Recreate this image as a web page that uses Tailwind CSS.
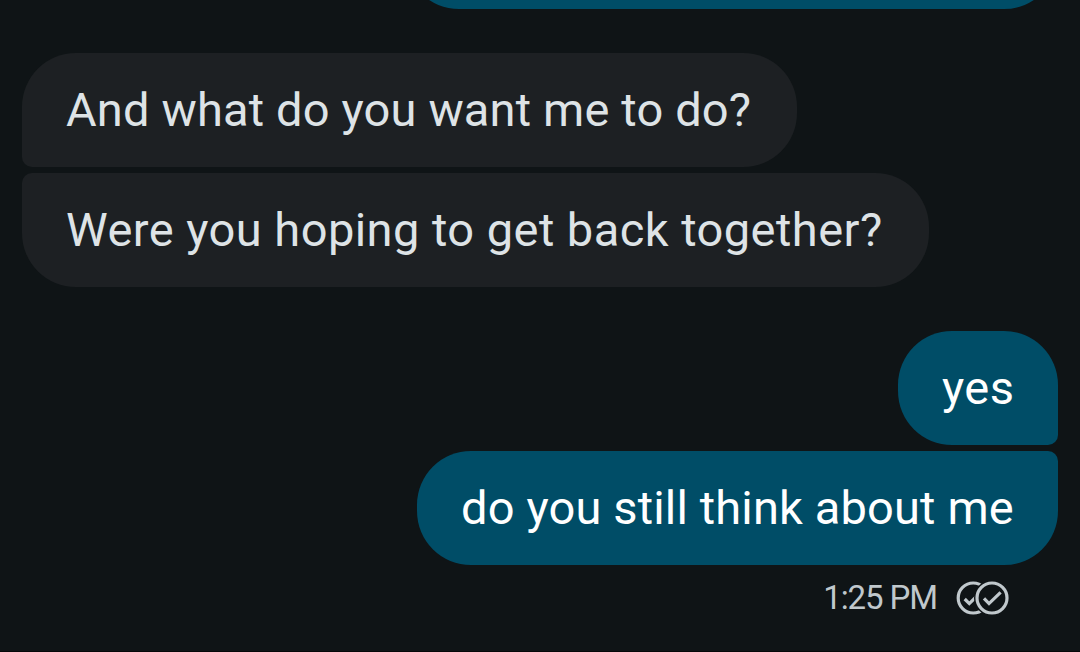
<!DOCTYPE html>
<html lang="en">
<head>
  <meta charset="UTF-8" />
  <meta name="viewport" content="width=device-width, initial-scale=1.0" />
  <title>Messages</title>
  <script src="https://cdn.jsdelivr.net/npm/@tailwindcss/browser@4"></script>
</head>
<body class="bg-[#0f1416] font-['Google_Sans','Product_Sans',Roboto,sans-serif]">
  <main class="h-[652px] overflow-hidden flex flex-col border-b border-[#060809] px-[22px] text-[47px] leading-none text-[#dee3e6]">
    <!-- Earlier message, scrolled off the top -->
    <div class="-mt-[105px] h-[114px] w-[653px] shrink-0 self-end rounded-[54px] bg-[#004d67]"></div>

    <!-- Received -->
    <section class="mt-[44px] flex flex-col items-start gap-[6px]">
      <div class="flex h-[114px] w-[775px] items-center rounded-[54px] rounded-bl-[10px] bg-[#1d2023] pb-[2px] pl-[44px] whitespace-nowrap">
        <p class="tracking-[0.16px]">And what do you want me to do?</p>
      </div>
      <div class="flex h-[114px] w-[907px] items-center rounded-[54px] rounded-tl-[10px] bg-[#1d2023] pb-[2px] pl-[44px] whitespace-nowrap">
        <p class="tracking-[0.45px]">Were you hoping to get back together?</p>
      </div>
    </section>

    <!-- Sent -->
    <section class="mt-[44px] flex flex-col items-end gap-[6px] text-white">
      <div class="flex h-[114px] w-[160px] items-center rounded-[54px] rounded-br-[10px] bg-[#004d67] pb-[2px] pl-[44px] whitespace-nowrap">
        <p class="tracking-[0.4px]">yes</p>
      </div>
      <div class="flex h-[114px] w-[641px] items-center rounded-[54px] rounded-tr-[10px] bg-[#004d67] pb-[2px] pl-[44px] whitespace-nowrap">
        <p class="tracking-[0.15px]">do you still think about me</p>
      </div>
    </section>

    <!-- Time and read receipt -->
    <div class="mt-[15px] flex items-center justify-end gap-[19px] pr-[48px] text-[33px] text-[#c0c8cc]">
      <span class="pb-[2px] tracking-[-1.1px] whitespace-nowrap">1:25 PM</span>
      <svg class="h-[36px] w-[54px]" viewBox="0 0 54 36" fill="none" stroke="currentColor" stroke-width="3.2">
        <mask id="behind" maskUnits="userSpaceOnUse" x="0" y="0" width="54" height="36">
          <rect width="54" height="36" fill="white" stroke="none" />
          <circle cx="36" cy="18" r="18" fill="black" stroke="none" />
        </mask>
        <g mask="url(#behind)">
          <circle cx="17.2" cy="18" r="15" />
          <path d="M8.7 19 13.3 23.6 20 17" />
        </g>
        <circle cx="36" cy="18" r="15" />
        <path d="M28 18.4 33 23.6 44.6 12.4" />
      </svg>
    </div>
  </main>
</body>
</html>
